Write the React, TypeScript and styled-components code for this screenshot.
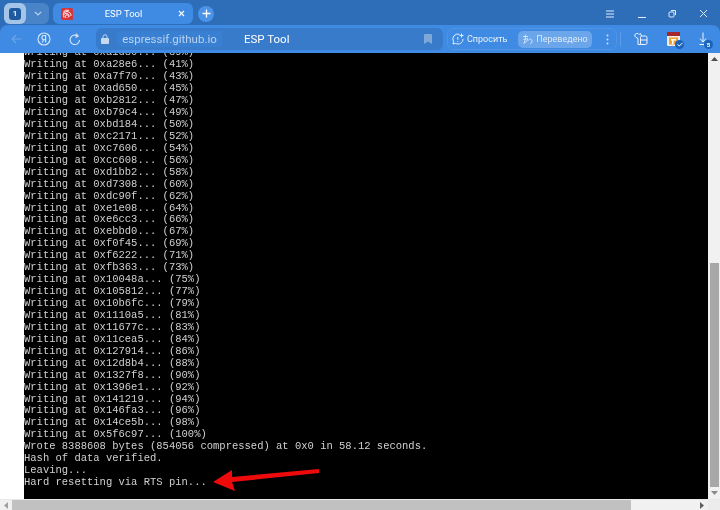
import styled, { createGlobalStyle } from "styled-components";

const GlobalStyle = createGlobalStyle`
  html, body {
    margin: 0;
    padding: 0;
    background: #fff;
  }
  #root {
    width: 720px;
    height: 510px;
  }
`;

const Window = styled.div`
  width: 720px;
  height: 510px;
  display: flex;
  flex-direction: column;
  overflow: hidden;
  font-family: "Roboto", "Noto Sans", sans-serif;
  background: #2f6fba;
  /* the reference is a soft, rescaled capture */
  filter: blur(0.3px);
`;

// top strip with tabs and window controls
const TabStrip = styled.div`
  height: 25px;
  flex: none;
  display: flex;
  align-items: center;
  padding: 2px 0 0 4px;
  box-sizing: border-box;
  background: #2e6eb9;
`;

const TabGroup = styled.div`
  width: 45px;
  height: 21px;
  display: flex;
  align-items: center;
  border-radius: 6px;
  background: #4a84c8;
`;

const GroupTile = styled.div`
  width: 22px;
  height: 21px;
  display: flex;
  align-items: center;
  justify-content: center;
  border-radius: 6px;
  background: #a5c5e8;
`;

const GroupBadge = styled.div`
  width: 12px;
  height: 12px;
  display: flex;
  align-items: center;
  justify-content: center;
  border-radius: 3px;
  background: #1f5a9e;
  color: #fff;
  font-size: 8px;
  font-weight: 600;
`;

const GroupChevron = styled.div`
  flex: 1;
  display: flex;
  justify-content: center;
  color: #b9d2ee;
`;

const Tab = styled.div`
  width: 140px;
  height: 21px;
  margin-left: 4px;
  display: flex;
  align-items: center;
  padding: 0 8px 0 8px;
  box-sizing: border-box;
  border-radius: 6px;
  background: #3f8ae2;
  color: #fff;
`;

const TabTitle = styled.div`
  flex: 1;
  padding-right: 4px;
  text-align: center;
  font-size: 9.5px;
`;

const NewTab = styled.div`
  width: 16px;
  height: 16px;
  margin-left: 5px;
  display: flex;
  align-items: center;
  justify-content: center;
  border-radius: 50%;
  background: #4b93e8;
  color: #fff;
`;

const WindowControls = styled.div`
  margin-left: auto;
  display: flex;
  align-items: center;
  color: #dfeaf7;
`;

const ControlSlot = styled.div<{ $width: number }>`
  width: ${(p) => p.$width}px;
  display: flex;
  justify-content: center;
`;

const Toolbar = styled.div`
  height: 28px;
  flex: none;
  display: flex;
  align-items: center;
  padding: 0 0 0 11px;
  box-sizing: border-box;
  border-radius: 8px 8px 0 0;
  background: #3f8ae2;
  color: #fff;
`;

const NavButton = styled.div<{ $width: number; $faded?: boolean }>`
  width: ${(p) => p.$width}px;
  display: flex;
  color: ${(p) => (p.$faded ? "#6ea6e8" : "#dbe9f8")};
`;

const AddressBar = styled.div`
  width: 347px;
  height: 22px;
  display: flex;
  align-items: center;
  padding: 0 11px 0 5px;
  box-sizing: border-box;
  border-radius: 6px;
  background: #387bcb;
`;

const LockIcon = styled.div`
  width: 16px;
  display: flex;
  color: #c5d9f0;
`;

const DomainPill = styled.div`
  width: 105px;
  height: 16px;
  display: flex;
  align-items: center;
  justify-content: center;
  border-radius: 4px;
  background: #3a80d2;
  color: #b8d2ef;
  font-size: 11.5px;
`;

const PageTitle = styled.div`
  margin-left: 22px;
  color: #fff;
  font-size: 11.5px;
`;

const Bookmark = styled.div`
  margin-left: auto;
  display: flex;
  color: #7fa8d8;
`;

const AssistGroup = styled.div`
  width: 170px;
  height: 22px;
  margin-left: 4px;
  display: flex;
  align-items: center;
  padding: 0 0 0 4px;
  box-sizing: border-box;
  border: 1px solid #4f94e6;
  border-radius: 7px;
`;

const AskLabel = styled.div`
  width: 41px;
  margin-left: 3px;
  color: #e8f1fb;
  font-size: 9px;
  white-space: nowrap;
`;

const TranslatedPill = styled.div`
  width: 74px;
  height: 17px;
  margin-left: 10px;
  display: flex;
  align-items: center;
  justify-content: center;
  gap: 3px;
  border-radius: 5px;
  background: #6ba5ea;
  color: #dce9f8;
  font-size: 9px;
  white-space: nowrap;
`;

const Dots = styled.div`
  margin-left: 14px;
  display: flex;
  color: #cfe0f5;
`;

const Divider = styled.div`
  width: 1px;
  height: 14px;
  margin-left: 3px;
  background: #5c9be6;
`;

const ToolIcon = styled.div<{ $gap: number }>`
  position: relative;
  margin-left: ${(p) => p.$gap}px;
  display: flex;
`;

const CountBadge = styled.div`
  position: absolute;
  right: -4px;
  bottom: -3px;
  width: 9px;
  height: 9px;
  display: flex;
  align-items: center;
  justify-content: center;
  border-radius: 50%;
  background: #1a64bc;
  color: #fff;
  font-size: 6px;
  font-weight: 700;
`;

const Page = styled.div`
  flex: 1;
  min-height: 0;
  display: flex;
  background: #fff;
`;

const Gutter = styled.div`
  width: 24px;
  flex: none;
  background: #fff;
`;

const Terminal = styled.div`
  position: relative;
  flex: 1;
  min-width: 0;
  display: flex;
  flex-direction: column;
  justify-content: flex-end;
  overflow: hidden;
  padding-bottom: 11px;
  background: #000;
`;

const Line = styled.div`
  height: 11.95px;
  flex: none;
  color: #d0d0d0;
  font-family: "Liberation Mono", "Courier New", monospace;
  font-size: 10.5px;
  line-height: 12px;
  white-space: pre;
`;

const Arrow = styled.svg`
  position: absolute;
  left: 189px;
  top: 416px;
`;

const VScroll = styled.div`
  width: 12px;
  flex: none;
  display: flex;
  flex-direction: column;
  background: #f1f1f1;
`;

const VSpacer = styled.div`
  flex: 1;
`;

const VThumb = styled.div`
  height: 224px;
  margin: 0 1px 0 2px;
  background: #a8a8a8;
`;

const ScrollCap = styled.div`
  height: 12px;
  flex: none;
  display: flex;
  align-items: center;
  justify-content: center;
  background: #f1f1f1;
  color: #505050;
`;

const HScroll = styled.div`
  height: 11px;
  flex: none;
  display: flex;
  align-items: stretch;
  border-top: 1px solid #e8e8e8;
  box-sizing: border-box;
  background: #f1f1f1;
`;

const HCap = styled.div`
  width: 12px;
  flex: none;
  display: flex;
  align-items: center;
  justify-content: center;
  color: #606060;
`;

const HThumb = styled.div`
  width: 619px;
  flex: none;
  background: #c1c1c1;
`;

const HTrack = styled.div`
  flex: 1;
`;

const HCorner = styled.div`
  width: 12px;
  flex: none;
  background: #ececec;
`;

const log = [
  "Writing at 0xa1d80... (39%)",
  "Writing at 0xa28e6... (41%)",
  "Writing at 0xa7f70... (43%)",
  "Writing at 0xad650... (45%)",
  "Writing at 0xb2812... (47%)",
  "Writing at 0xb79c4... (49%)",
  "Writing at 0xbd184... (50%)",
  "Writing at 0xc2171... (52%)",
  "Writing at 0xc7606... (54%)",
  "Writing at 0xcc608... (56%)",
  "Writing at 0xd1bb2... (58%)",
  "Writing at 0xd7308... (60%)",
  "Writing at 0xdc90f... (62%)",
  "Writing at 0xe1e08... (64%)",
  "Writing at 0xe6cc3... (66%)",
  "Writing at 0xebbd0... (67%)",
  "Writing at 0xf0f45... (69%)",
  "Writing at 0xf6222... (71%)",
  "Writing at 0xfb363... (73%)",
  "Writing at 0x10048a... (75%)",
  "Writing at 0x105812... (77%)",
  "Writing at 0x10b6fc... (79%)",
  "Writing at 0x1110a5... (81%)",
  "Writing at 0x11677c... (83%)",
  "Writing at 0x11cea5... (84%)",
  "Writing at 0x127914... (86%)",
  "Writing at 0x12d8b4... (88%)",
  "Writing at 0x1327f8... (90%)",
  "Writing at 0x1396e1... (92%)",
  "Writing at 0x141219... (94%)",
  "Writing at 0x146fa3... (96%)",
  "Writing at 0x14ce5b... (98%)",
  "Writing at 0x5f6c97... (100%)",
  "Wrote 8388608 bytes (854056 compressed) at 0x0 in 58.12 seconds.",
  "Hash of data verified.",
  "Leaving...",
  "Hard resetting via RTS pin...",
];

function App() {
  return (
    <Window>
      <GlobalStyle />
      <TabStrip>
        <TabGroup>
          <GroupTile>
            <GroupBadge>1</GroupBadge>
          </GroupTile>
          <GroupChevron>
            <svg width="8" height="5" viewBox="0 0 8 5" fill="none" stroke="currentColor" strokeWidth="1.2">
              <path d="M.8.8 4 4 7.2.8" />
            </svg>
          </GroupChevron>
        </TabGroup>
        <Tab>
          <svg width="12" height="12" viewBox="0 0 12 12">
            <rect width="12" height="12" rx="1.5" fill="#d8353a" />
            <g fill="none" stroke="#fff" strokeWidth="0.9">
              <path d="M2 4.5A5 5 0 0 1 8 2.4" />
              <path d="M2 7a4 4 0 0 1 4-3.5A4.5 4.5 0 0 1 10 8" />
              <path d="M3 9.500a3 3 0 0 1 1-4 3 3 0 0 1 4 3.500" />
              <path d="M5 10a2 2 0 0 1 0-3 1.500 1.500 0 0 1 1.800 2.500" />
            </g>
          </svg>
          <TabTitle>ESP Tool</TabTitle>
          <svg width="7" height="7" viewBox="0 0 7 7" stroke="currentColor" strokeWidth="1.1">
            <path d="M1 1l5 5M6 1 1 6" />
          </svg>
        </Tab>
        <NewTab>
          <svg width="9" height="9" viewBox="0 0 9 9" stroke="currentColor" strokeWidth="1.3">
            <path d="M4.500.5v8M.5 4.500h8" />
          </svg>
        </NewTab>
        <WindowControls>
          <ControlSlot $width={32}>
            <svg width="8" height="8" viewBox="0 0 8 8" stroke="currentColor" strokeWidth="1.2">
              <path d="M0 1h8M0 4h8M0 7h8" />
            </svg>
          </ControlSlot>
          <ControlSlot $width={32}>
            <svg width="8" height="8" viewBox="0 0 8 8" stroke="currentColor" strokeWidth="1.1">
              <path d="M0 7.500h8" />
            </svg>
          </ControlSlot>
          <ControlSlot $width={28}>
            <svg width="9" height="9" viewBox="0 0 9 9" fill="none" stroke="currentColor" strokeWidth="1">
              <rect x="1" y="3" width="5" height="5" rx="1" />
              <path d="M3 1.500h4.500V6" />
            </svg>
          </ControlSlot>
          <ControlSlot $width={34}>
            <svg width="9" height="9" viewBox="0 0 9 9" stroke="currentColor" strokeWidth="1">
              <path d="M1 1l7 7M8 1 1 8" />
            </svg>
          </ControlSlot>
        </WindowControls>
      </TabStrip>

      <Toolbar>
        <NavButton $width={26} $faded>
          <svg width="11" height="10" viewBox="0 0 11 10" fill="none" stroke="currentColor" strokeWidth="1.1">
            <path d="M10.500 5H1M5 1 1 5l4 4" />
          </svg>
        </NavButton>
        <NavButton $width={32}>
          <svg width="14" height="14" viewBox="0 0 14 14" fill="none" stroke="currentColor" strokeWidth="1.1">
            <circle cx="7" cy="7" r="6" />
            <path d="M8.600 10.500v-7H7a2.100 2.100 0 0 0 0 4.200h1.600M6.800 7.700 5 10.500" />
          </svg>
        </NavButton>
        <NavButton $width={27}>
          <svg width="12" height="13" viewBox="0 0 12 13" fill="none" stroke="currentColor" strokeWidth="1.1">
            <path d="M10.500 7a4.700 4.700 0 1 1-2-4" />
            <path d="M7 .5 9.200 3 6.500 4.500" />
          </svg>
        </NavButton>
        <AddressBar>
          <LockIcon>
            <svg width="8" height="10" viewBox="0 0 8 10">
              <path d="M2 4V2.800a2 2 0 0 1 4 0V4" fill="none" stroke="currentColor" />
              <rect y="4" width="8" height="6" rx="1" fill="currentColor" />
            </svg>
          </LockIcon>
          <DomainPill>espressif.github.io</DomainPill>
          <PageTitle>ESP Tool</PageTitle>
          <Bookmark>
            <svg width="8" height="10" viewBox="0 0 8 10" fill="currentColor">
              <path d="M0 1a1 1 0 0 1 1-1h6a1 1 0 0 1 1 1v9L4 7.500 0 10z" />
            </svg>
          </Bookmark>
        </AddressBar>
        <AssistGroup>
          <svg width="12" height="12" viewBox="0 0 12 12" fill="none" stroke="#e8f1fb" strokeWidth="1">
            <path d="M7.500 1.300A5 5 0 0 0 1.500 8.500L1 11l2.600-.6A5 5 0 0 0 11 6" />
            <path d="M5.800 4v2.800M5.800 8v.8M9.500 .5v4M7.500 2.500h4" />
          </svg>
          <AskLabel>Спросить</AskLabel>
          <TranslatedPill>
            <svg width="11" height="11" viewBox="0 0 11 11" fill="none" stroke="#dce9f8" strokeWidth="0.9">
              <path d="M1 2.500h5M3.500.8C3.500 5 3 8 1.500 9.500M1.500 5.500c1 0 3.500-.5 4-1 .5 1.500-1 4-3.500 4.500M6.500 6.500c.5-2 3.500-2 3.500.5 0 1.500-.8 2.500-2 3" />
            </svg>
            Переведено
          </TranslatedPill>
          <Dots>
            <svg width="3" height="11" viewBox="0 0 3 11" fill="currentColor">
              <circle cx="1.500" cy="1.500" r="1" />
              <circle cx="1.500" cy="5.500" r="1" />
              <circle cx="1.500" cy="9.500" r="1" />
            </svg>
          </Dots>
        </AssistGroup>
        <Divider />
        <ToolIcon $gap={13}>
          <svg width="14" height="14" viewBox="0 0 14 14" fill="none" stroke="#eef4fb" strokeWidth="1">
            <path d="M4 1.500H2.500a2 2 0 0 0-1 3.500L4 6.500v6h3M4 1.500c.5 1 2 1 2.500 0l1 2.500" />
            <rect x="6.500" y="4" width="6.500" height="8.500" rx="1.500" />
            <path d="M6.500 8H13" />
          </svg>
        </ToolIcon>
        <ToolIcon $gap={19}>
          <svg width="13" height="14" viewBox="0 0 13 14">
            <rect width="13" height="14" rx="1.500" fill="#f2ede4" />
            <rect width="13" height="4" fill="#a5272c" />
            <rect x="2" y="5.500" width="9" height="7" fill="#f0a033" />
            <path d="M4 7h5v1.500H6.500V12H5V8.500H4z" fill="#fff" />
          </svg>
          <CountBadge>
            <svg width="6" height="5" viewBox="0 0 6 5" fill="none" stroke="#fff" strokeWidth="1">
              <path d="M.5 2.500 2.300 4 5.500.8" />
            </svg>
          </CountBadge>
        </ToolIcon>
        <ToolIcon $gap={19}>
          <svg width="10" height="14" viewBox="0 0 10 14" fill="none" stroke="#eef4fb" strokeWidth="1">
            <path d="M4 .5v9M1 6.500 4 10l3-3.500M.5 12.500h7" />
          </svg>
          <CountBadge>5</CountBadge>
        </ToolIcon>
      </Toolbar>

      <Page>
        <Gutter />
        <Terminal>
          {log.map((text) => (
            <Line key={text}>{text}</Line>
          ))}
          <Arrow width="108" height="24" viewBox="0 0 108 24">
            <path d="M0 13 19 1 19 8 106 0 106 4 19 13 22 22z" fill="#ee0a0a" />
          </Arrow>
        </Terminal>
        <VScroll>
          <ScrollCap>
            <svg width="7" height="4" viewBox="0 0 7 4" fill="currentColor">
              <path d="M0 4h7L3.500 0z" />
            </svg>
          </ScrollCap>
          <VSpacer />
          <VThumb />
          <ScrollCap>
            <svg width="7" height="4" viewBox="0 0 7 4" fill="#8a8a8a">
              <path d="M0 0h7L3.500 4z" />
            </svg>
          </ScrollCap>
        </VScroll>
      </Page>
      <HScroll>
        <HCap>
          <svg width="4" height="7" viewBox="0 0 4 7" fill="#a0a0a0">
            <path d="M4 0v7L0 3.500z" />
          </svg>
        </HCap>
        <HThumb />
        <HTrack />
        <HCap>
          <svg width="4" height="7" viewBox="0 0 4 7" fill="currentColor">
            <path d="M0 0v7l4-3.500z" />
          </svg>
        </HCap>
        <HCorner />
      </HScroll>
    </Window>
  );
}

export default App;
